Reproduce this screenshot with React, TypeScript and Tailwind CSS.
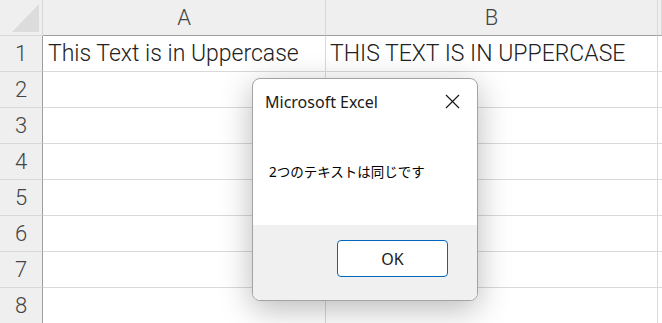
import React from "react";

const rows = [1, 2, 3, 4, 5, 6, 7, 8];

const cells: Record<number, [string, string]> = {
  1: ["This Text is in Uppercase", "THIS TEXT IS IN UPPERCASE"],
};

const gridFont = { fontFamily: "Roboto, 'Noto Sans', sans-serif" };
const uiFont = { fontFamily: "'Noto Sans', 'Noto Sans CJK JP', sans-serif" };

function CloseIcon() {
  return (
    <svg width="15" height="15" viewBox="0 0 15 15" fill="none">
      <path d="M1 1L14 14M14 1L1 14" stroke="#1a1a1a" strokeWidth="1.2" />
    </svg>
  );
}

function MessageBox() {
  return (
    <div
      className="absolute left-[252px] top-[78px] flex h-[223px] w-[226px] flex-col overflow-hidden rounded-[8px] border border-[#a3a3a3] bg-white font-normal shadow-[0_8px_32px_rgba(0,0,0,0.28)]"
      style={uiFont}
    >
      <div className="flex h-[44px] items-center justify-between pl-[12px] pr-[17px] pt-[1px]">
        <span className="text-[16px] text-[#1a1a1a]">Microsoft Excel</span>
        <CloseIcon />
      </div>
      <div className="flex h-[102px] items-center pl-[16px] pb-[4px]">
        <span className="text-[13.5px] text-black">2つのテキストは同じです</span>
      </div>
      <div className="flex flex-1 items-start justify-end bg-[#f0f0f0] pr-[29px] pt-[15px]">
        <button
          type="button"
          className="flex h-[37px] w-[111px] items-center justify-center rounded-[4px] border border-[#0067c0] bg-white text-[16px] text-[#1a1a1a]"
        >
          OK
        </button>
      </div>
    </div>
  );
}

export default function App() {
  return (
    <div className="relative h-[323px] w-[662px] overflow-hidden bg-white font-light" style={gridFont}>
      <div className="grid grid-cols-[43px_283px_332px_1fr]">
        {/* header row */}
        <div className="flex h-[36px] items-start border-b border-r border-b-[#d8d8d8] border-r-[#d8d8d8] bg-[#efefef] pl-[12px] pt-[4px]">
          <svg width="28" height="29" viewBox="0 0 28 29">
            <polygon points="27,0 27,28 0,28" fill="#dcdcdc" />
          </svg>
        </div>
        {["A", "B", ""].map((c, i) => (
          <div
            key={i}
            className="flex h-[36px] items-center justify-center border-b border-r border-b-[#9e9e9e] border-r-[#d8d8d8] bg-[#efefef] pb-[1px] text-[22px] text-[#444]"
          >
            {c}
          </div>
        ))}
        {rows.map((r) => (
          <React.Fragment key={r}>
            <div className="flex h-[36px] items-center justify-center border-b border-r border-b-[#d8d8d8] border-r-[#9e9e9e] bg-[#efefef] text-[22px] text-[#444]">
              {r}
            </div>
            <div className="flex h-[36px] items-center border-b border-r border-[#d9d9d9] pl-[5px] pt-[2px] text-[23px] text-[#222]">
              {cells[r]?.[0]}
            </div>
            <div className="flex h-[36px] items-center border-b border-r border-[#d9d9d9] pl-[4px] pt-[2px] text-[23px] text-[#222]">
              {cells[r]?.[1]}
            </div>
            <div className="h-[36px] border-b border-[#d9d9d9]" />
          </React.Fragment>
        ))}
      </div>
      <MessageBox />
    </div>
  );
}
